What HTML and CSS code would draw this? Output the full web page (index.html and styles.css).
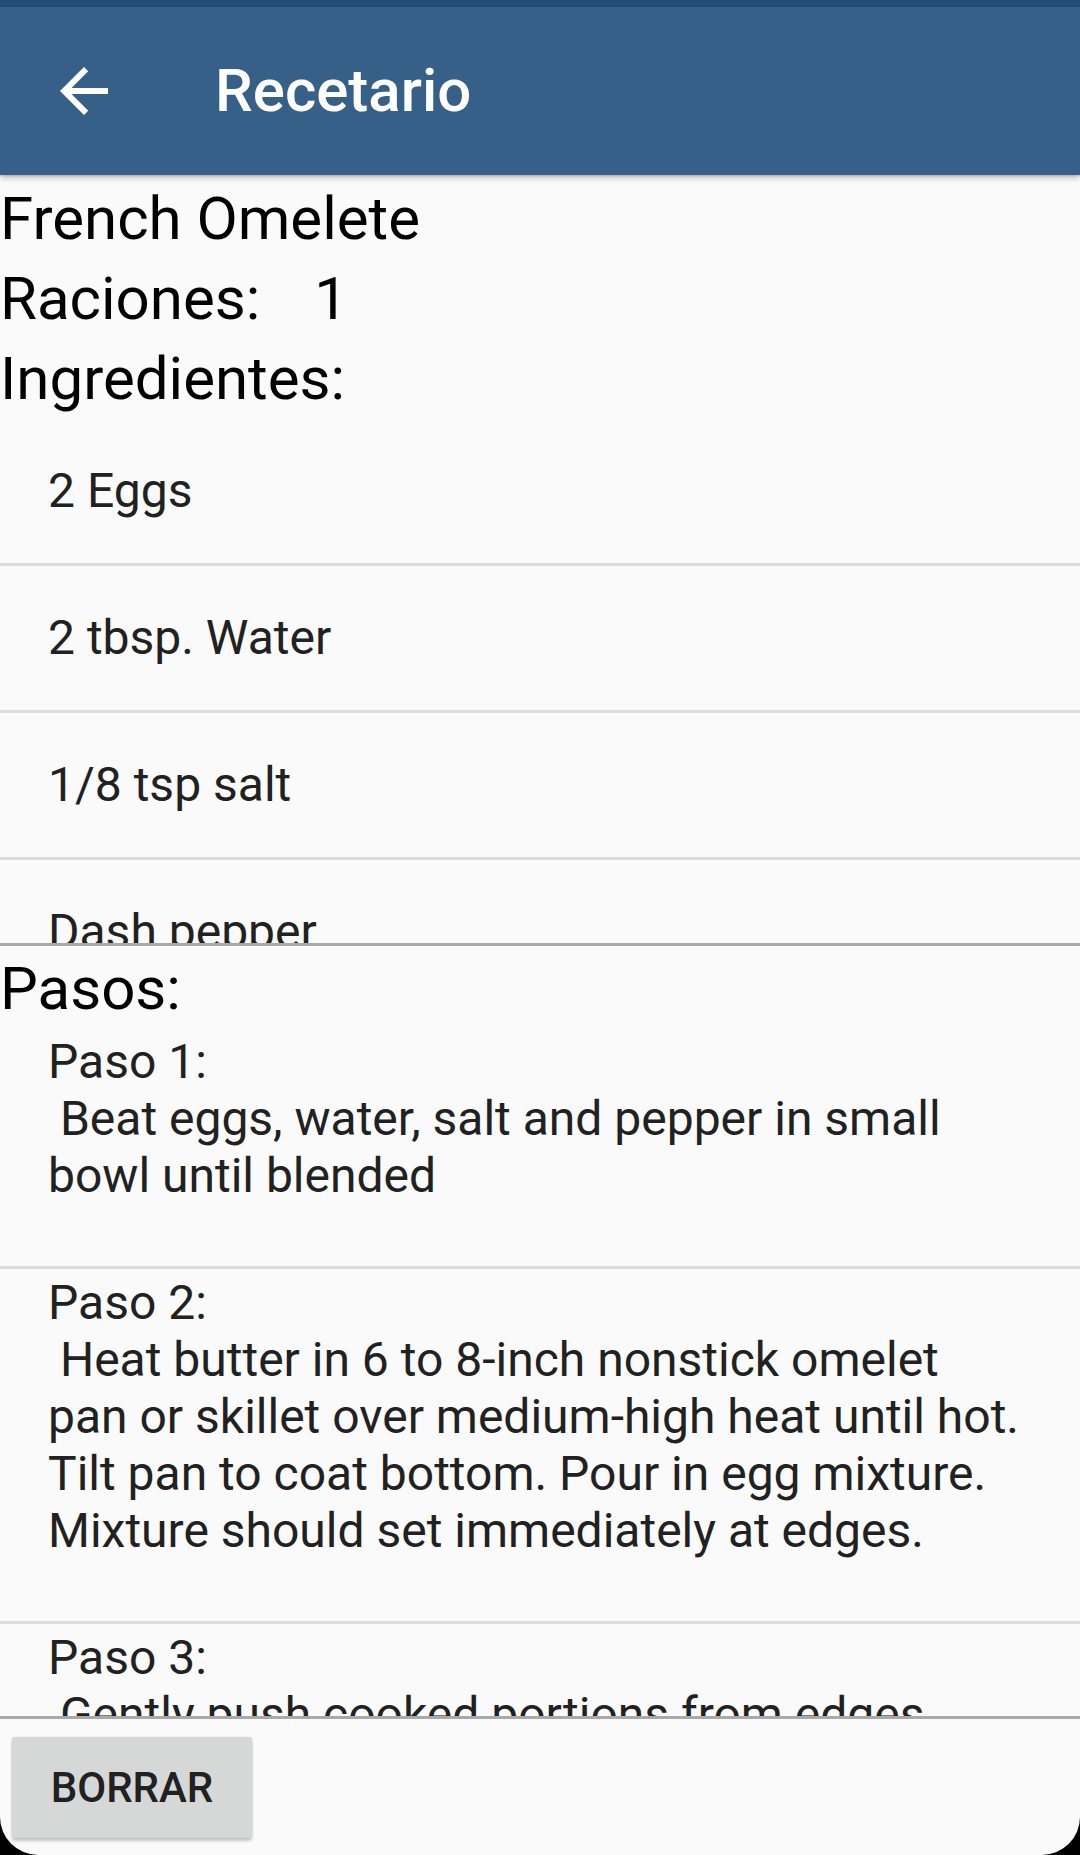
FILE: index.html
```html
<!DOCTYPE html>
<html lang="es">
<head>
<meta charset="utf-8">
<title>Recetario</title>
<link rel="stylesheet" href="styles.css">
</head>
<body>
<div class="screen">
  <div class="statusbar"></div>
  <header class="appbar">
    <svg class="nav-icon" viewBox="0 0 24 24" width="72" height="72" aria-label="Atrás">
      <path fill="#ffffff" d="M20 11H7.83l5.59-5.59L12 4l-8 8 8 8 1.41-1.41L7.83 13H20v-2z"/>
    </svg>
    <h1 class="title">Recetario</h1>
  </header>

  <div class="headings">
    <div class="heading">French Omelete</div>
    <div class="heading">Raciones:<span class="num">1</span></div>
    <div class="heading">Ingredientes:</div>
  </div>

  <ul class="ingredients">
    <li class="ing">2 Eggs</li>
    <li class="ing">2 tbsp. Water</li>
    <li class="ing">1/8 tsp salt</li>
    <li class="ing">Dash pepper</li>
    <li class="ing">1 tsp. butter</li>
  </ul>

  <div class="sep"></div>

  <div class="heading pasos">Pasos:</div>

  <ul class="steps">
    <li class="step">Paso 1:<br>&nbsp;Beat eggs, water, salt and pepper in small<br>bowl until blended</li>
    <li class="step">Paso 2:<br>&nbsp;Heat butter in 6 to 8-inch nonstick omelet<br>pan or skillet over medium-high heat until hot.<br>Tilt pan to coat bottom. Pour in egg mixture.<br>Mixture should set immediately at edges.</li>
    <li class="step">Paso 3:<br>&nbsp;Gently push cooked portions from edges<br>toward the center with inverted turner so that<br>uncooked eggs can reach the hot pan surface.</li>
  </ul>

  <div class="sep"></div>

  <div class="bottombar">
    <button class="btn" type="button">BORRAR</button>
  </div>
</div>
</body>
</html>
```

FILE: styles.css
```css
html, body {
  margin: 0;
  padding: 0;
  background: #000000;
}

.screen {
  width: 1080px;
  height: 1855px;
  display: flex;
  flex-direction: column;
  background: #fafafa;
  border-radius: 0 0 38px 38px;
  overflow: hidden;
  font-family: Roboto, "Liberation Sans", sans-serif;
}

.statusbar {
  flex: none;
  height: 7px;
  background: #234d78;
}

.appbar {
  flex: none;
  height: 168px;
  background: #376088;
  display: flex;
  align-items: center;
  padding-left: 48px;
  gap: 95px;
  position: relative;
  z-index: 2;
  box-shadow: 0 3px 6px rgba(0, 0, 0, 0.22), 0 1px 2px rgba(0, 0, 0, 0.15);
}

.nav-icon {
  display: block;
  flex: none;
}

.title {
  margin: 0;
  font-size: 60px;
  font-weight: 500;
  color: #ffffff;
  line-height: 70px;
}

.headings {
  flex: none;
  padding-top: 4px;
}

.heading {
  font-size: 60px;
  line-height: 80px;
  color: #000000;
  white-space: nowrap;
}

.num {
  margin-left: 54px;
}

.ingredients {
  flex: none;
  height: 524px;
  overflow: hidden;
  margin: 0;
  padding: 0;
  list-style: none;
}

.ing {
  height: 144px;
  display: flex;
  align-items: center;
  padding-left: 48px;
  font-size: 48px;
  line-height: 56px;
  color: #212121;
  border-bottom: 3px solid #dcdcdc;
}

.sep {
  flex: none;
  height: 3px;
  background: #a9a9a9;
}

.pasos {
  flex: none;
  padding-top: 4px;
  line-height: 78px;
}

.steps {
  flex: 1 1 auto;
  min-height: 0;
  overflow: hidden;
  margin: 0;
  padding: 0;
  list-style: none;
}

.step {
  padding: 5px 40px 62px 48px;
  font-size: 48px;
  line-height: 57px;
  color: #212121;
  white-space: nowrap;
  border-bottom: 3px solid #dcdcdc;
}

.bottombar {
  flex: none;
  height: 136px;
  box-sizing: border-box;
  padding: 18px 0 0 12px;
}

.btn {
  width: 240px;
  height: 101px;
  border: none;
  border-radius: 3px;
  background: #d6d7d7;
  color: #212121;
  font-family: Roboto, "Liberation Sans", sans-serif;
  font-size: 42px;
  font-weight: 500;
  padding: 0;
  box-shadow: 0 3px 3px rgba(0, 0, 0, 0.2), 0 0 2px rgba(0, 0, 0, 0.12);
}
```
